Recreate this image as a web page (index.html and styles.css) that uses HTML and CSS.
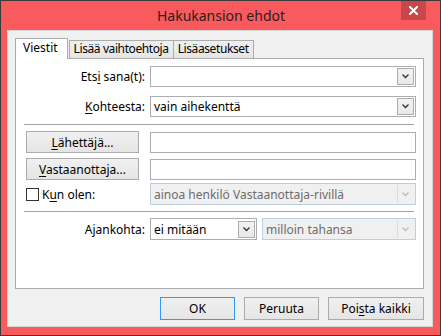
FILE: index.html
```html
<!DOCTYPE html>
<html lang="fi">
<head>
    <meta charset="UTF-8">
    <meta name="viewport" content="width=device-width, initial-scale=1.0">
    <title>Hakukansion ehdot</title>
    <link rel="stylesheet" href="styles.css">
</head>
<body>
    <div class="window">
        <div class="titlebar">
            <div class="title">Hakukansion ehdot</div>
            <div class="close-btn">
                <svg width="9" height="9" viewBox="0 0 9 9">
                    <path d="M1 1 L8 8 M8 1 L1 8" stroke="#fff" stroke-width="2" stroke-linecap="square"/>
                </svg>
            </div>
        </div>

        <div class="client">
            <div class="tabs">
                <div class="tab active">Viestit</div>
                <div class="tab">Lisää vaihtoehtoja</div>
                <div class="tab">Lisäasetukset</div>
            </div>

            <div class="tab-panel">
                <div class="row row-first">
                    <label class="label">Ets<u>i</u> sana(t):</label>
                    <div class="combo">
                        <span class="combo-text"></span>
                        <span class="combo-arrow"><svg width="7" height="5" viewBox="0 0 7 5"><path d="M0.5 0.5 L3.5 3.5 L6.5 0.5" fill="none" stroke="#333" stroke-width="1.3"/></svg></span>
                    </div>
                </div>

                <div class="row">
                    <label class="label"><u>K</u>ohteesta:</label>
                    <div class="combo">
                        <span class="combo-text">vain aihekenttä</span>
                        <span class="combo-arrow"><svg width="7" height="5" viewBox="0 0 7 5"><path d="M0.5 0.5 L3.5 3.5 L6.5 0.5" fill="none" stroke="#333" stroke-width="1.3"/></svg></span>
                    </div>
                </div>

                <div class="separator"></div>

                <div class="row row-btn">
                    <div><button class="btn side-btn"><u>L</u>ähettäjä...</button></div>
                    <div class="textbox"></div>
                </div>

                <div class="row row-btn">
                    <div><button class="btn side-btn"><u>V</u>astaanottaja...</button></div>
                    <div class="textbox"></div>
                </div>

                <div class="row row-check">
                    <div class="check-label">
                        <span class="checkbox"></span>
                        <span>K<u>u</u>n olen:</span>
                    </div>
                    <div class="combo disabled">
                        <span class="combo-text">ainoa henkilö Vastaanottaja-rivillä</span>
                        <span class="combo-arrow"><svg width="7" height="5" viewBox="0 0 7 5"><path d="M0.5 0.5 L3.5 3.5 L6.5 0.5" fill="none" stroke="#bcbcbc" stroke-width="1.3"/></svg></span>
                    </div>
                </div>

                <div class="separator sep-low"></div>

                <div class="row row-time">
                    <label class="label">Ajankohta:</label>
                    <div class="time-fields">
                        <div class="combo combo-small">
                            <span class="combo-text">ei mitään</span>
                            <span class="combo-arrow"><svg width="7" height="5" viewBox="0 0 7 5"><path d="M0.5 0.5 L3.5 3.5 L6.5 0.5" fill="none" stroke="#333" stroke-width="1.3"/></svg></span>
                        </div>
                        <div class="combo disabled combo-grow">
                            <span class="combo-text">milloin tahansa</span>
                            <span class="combo-arrow"><svg width="7" height="5" viewBox="0 0 7 5"><path d="M0.5 0.5 L3.5 3.5 L6.5 0.5" fill="none" stroke="#bcbcbc" stroke-width="1.3"/></svg></span>
                        </div>
                    </div>
                </div>
            </div>

            <div class="buttons">
                <button class="btn btn-default">OK</button>
                <button class="btn">Peruuta</button>
                <button class="btn btn-wide">Poi<u>s</u>ta kaikki</button>
            </div>
        </div>
    </div>
</body>
</html>
```

FILE: styles.css
```css
* {
    margin: 0;
    padding: 0;
    box-sizing: border-box;
}

body {
    font-family: "Noto Sans", "Liberation Sans", sans-serif;
    font-size: 12px;
    color: #000;
    background: #fff;
}

u {
    text-decoration-thickness: 1px;
    text-underline-offset: 2px;
}

.window {
    width: 441px;
    height: 336px;
    background: #f85a5d;
    border: 1px solid #3a3a3a;
    display: flex;
    flex-direction: column;
}

.titlebar {
    height: 29px;
    display: flex;
    align-items: flex-start;
    padding-left: 40px;
}

.title {
    flex: 1;
    text-align: center;
    font-size: 14px;
    color: #2a2020;
    padding-top: 5px;
}

.close-btn {
    width: 25px;
    height: 19px;
    margin-right: 14px;
    background: #c7474a;
    display: flex;
    align-items: center;
    justify-content: center;
}

.client {
    flex: 1;
    margin: 0 7px 8px 6px;
    background: #f0f0f0;
    border: 1px solid #d6d6d6;
    display: flex;
    flex-direction: column;
    padding: 7px 8px 6px 7px;
}

/* tabs */
.tabs {
    display: flex;
    align-items: flex-end;
    height: 20px;
    position: relative;
    z-index: 1;
}

.tab {
    height: 18px;
    padding: 0 4px;
    border: 1px solid #acacac;
    border-bottom: none;
    background: linear-gradient(#f0f0f0, #e5e5e5);
    line-height: 16px;
    margin-left: -1px;
    letter-spacing: -0.4px;
}

.tab.active {
    height: 21px;
    margin-bottom: -1px;
    margin-left: 0;
    padding: 0 9px 0 7px;
    background: #fff;
    line-height: 18px;
    margin-right: 2px;
    letter-spacing: 0;
}

.tab-panel {
    flex: 1;
    background: #fff;
    border: 1px solid #acacac;
    padding: 0 7px 0 10px;
    margin-bottom: 8px;
}

/* form rows */
.row {
    display: grid;
    grid-template-columns: 119px 1fr;
    column-gap: 5px;
    align-items: center;
    margin-top: 9px;
}

.row-first {
    margin-top: 7px;
}

.label {
    text-align: right;
}

.separator {
    height: 1px;
    background: #a0a0a0;
    margin: 7px 2px 0 -2px;
}

.sep-low {
    margin-top: 6px;
}

.row-btn {
    margin-top: 6px;
}

.row-btn + .row-btn {
    margin-top: 5px;
}

.row-check {
    margin-top: 3px;
}

.row-time {
    margin-top: 6px;
}

.combo,
.textbox {
    height: 21px;
    border: 1px solid #abadb3;
    background: #fff;
    display: flex;
    align-items: center;
}

.combo-text {
    flex: 1;
    padding-left: 3px;
    white-space: nowrap;
    overflow: hidden;
}

.combo-arrow {
    width: 17px;
    height: 17px;
    margin-right: 1px;
    border: 1px solid #acacac;
    background: linear-gradient(#f2f2f2, #e8e8e8);
    display: flex;
    align-items: center;
    justify-content: center;
}

.combo.disabled {
    height: 22px;
    background: #f0f0f0;
    border-color: #bfcde0;
    color: #6d6d6d;
}

.combo.disabled .combo-arrow {
    background: transparent;
    border-color: transparent;
    border-left: 1px solid #dcdcdc;
    height: 18px;
}

.check-label {
    display: flex;
    align-items: center;
    gap: 3px;
}

.checkbox {
    width: 13px;
    height: 13px;
    border: 1px solid #333;
    background: #fff;
}

.time-fields {
    display: flex;
    gap: 5px;
}

.combo-small {
    width: 107px;
    height: 22px;
}

.combo-grow {
    flex: 1;
}

/* buttons */
.btn {
    font-family: inherit;
    font-size: 12px;
    color: #000;
    height: 23px;
    border: 1px solid #acacac;
    background: linear-gradient(#f0f0f0, #e5e5e5);
    width: 75px;
}

.side-btn {
    width: 113px;
    height: 22px;
    display: block;
}

.buttons {
    display: flex;
    justify-content: flex-end;
    gap: 9px;
}

.btn-default {
    border-color: #3399ff;
}

.btn-wide {
    width: 96px;
}
```
